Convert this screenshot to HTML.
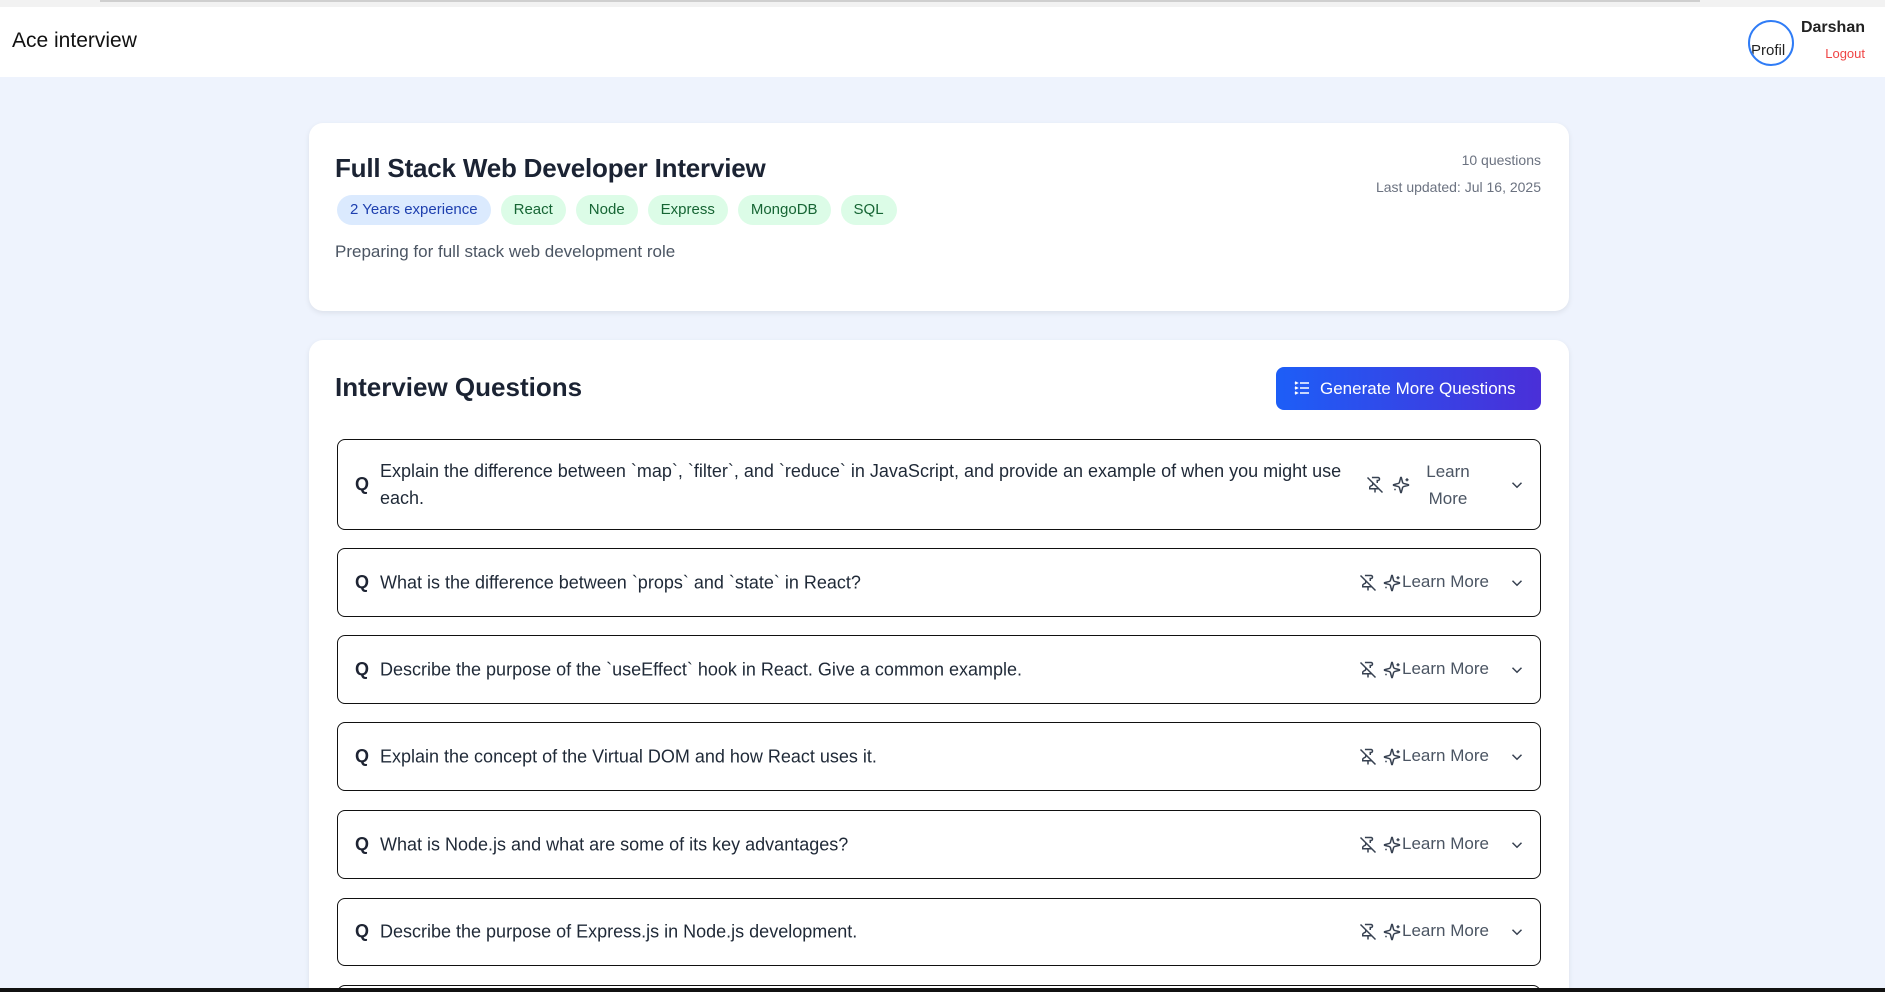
<!DOCTYPE html>
<html><head><meta charset="utf-8"><style>
*{box-sizing:border-box;margin:0;padding:0}
html,body{width:1885px;height:992px;overflow:hidden}
body{background:#eef3fd;font-family:"Liberation Sans",sans-serif;color:#1e2433;position:relative}
.top{position:absolute;left:0;top:0;width:1885px;height:7px;background:#f2f2f2}
.top i{position:absolute;left:100px;top:0;width:1600px;height:2px;background:#cfcfcf}
.hdr{position:absolute;left:0;top:7px;width:1885px;height:70px;background:#fff}
.logo{position:absolute;left:12px;top:22px;font-size:21px;color:#111}
.av{position:absolute;left:1748px;top:13px;width:46px;height:46px;border:2px solid #2f7cf6;border-radius:50%;overflow:hidden;font-size:15px;color:#222;padding:20px 0 0 1px}
.name{position:absolute;right:20px;top:12px;font-size:16px;font-weight:bold;color:#222}
.lo{position:absolute;right:20px;top:39px;font-size:13px;color:#ef4444}
.card{position:absolute;left:309px;width:1260px;background:#fff;border-radius:14px;box-shadow:0 2px 6px rgba(0,0,0,.08)}
h1{position:absolute;left:26px;top:30px;font-size:26px;font-weight:bold;color:#1b2333;letter-spacing:-.2px}
.tags{position:absolute;left:28px;top:72px;display:flex;gap:10px}
.tag{height:30px;line-height:30px;padding:0 13px;border-radius:15px;background:#dcfce7;color:#166534;font-size:15px}
.tag.b{background:#dbeafe;color:#1e40af}
.desc{position:absolute;left:26px;top:119px;font-size:17px;color:#4b5563}
.meta{position:absolute;right:28px;top:24px;text-align:right;font-size:14px;color:#6b7280;line-height:27px}
h2{position:absolute;left:26px;top:32px;font-size:26px;font-weight:bold;color:#1b2333}
.btn{position:absolute;left:967px;top:27px;width:265px;height:43px;border-radius:8px;background:linear-gradient(90deg,#1d5ef7,#4a2fd8);color:#fff;font-size:17px;line-height:43px;padding-left:44px}
.btn svg{position:absolute;left:18px;top:14px}
.q{position:absolute;left:28px;width:1204px;border:1.5px solid #111;border-radius:8px;background:#fff}
.q .Q{position:absolute;left:17px;top:50%;margin-top:-11px;font-weight:bold;font-size:18px}
.q .t{position:absolute;left:42px;top:50%;transform:translateY(-50%);font-size:18px;line-height:27px;color:#1f2937;white-space:nowrap}
.ic{position:absolute;top:50%;margin-top:-9px}
.lm{position:absolute;left:1064px;top:50%;margin-top:-11px;font-size:17px;color:#4b5563}
</style></head><body>
<div class="top"><i></i></div>
<div class="hdr"><div class="logo">Ace interview</div>
<div class="av">Profil</div>
<div class="name">Darshan</div><div class="lo">Logout</div></div>

<div class="card" style="top:123px;height:188px">
<h1>Full Stack Web Developer Interview</h1>
<div class="tags"><span class="tag b">2 Years experience</span><span class="tag">React</span><span class="tag">Node</span><span class="tag">Express</span><span class="tag">MongoDB</span><span class="tag">SQL</span></div>
<div class="desc">Preparing for full stack web development role</div>
<div class="meta">10 questions<br>Last updated: Jul 16, 2025</div>
</div>

<div class="card" style="top:340px;height:648px;border-radius:14px 14px 0 0;overflow:hidden">
<h2>Interview Questions</h2>
<div class="btn"><svg width="16" height="14" viewBox="0 0 16 14" fill="none" stroke="#fff" stroke-width="1.6"><path d="M6 2h9M6 7h9M6 12h9M1 1l2 1-2 1M1 6l2 1-2 1M1 11l2 1-2 1"/></svg>Generate More Questions</div>

<div class="q" style="top:99px;height:91px"><span class="Q">Q</span><div class="t">Explain the difference between `map`, `filter`, and `reduce` in JavaScript, and provide an example of when you might use<br>each.</div>
<svg class="ic" style="left:1028px" width="18" height="18" viewBox="0 0 24 24" fill="none" stroke="#374151" stroke-width="2"><path d="M2 2l20 20M12 17v5M9 9v1.8a2 2 0 01-1.1 1.8l-1.8.9A2 2 0 005 15.2V17h12M15 9.3V6h1a2 2 0 000-4H7.9"/></svg>
<svg class="ic" style="left:1054px" width="18" height="18" viewBox="0 0 24 24" fill="none" stroke="#374151" stroke-width="2"><path d="M9.9 15.5a2 2 0 00-1.4-1.4L2.4 12.5a.5.5 0 010-1l6.1-1.6a2 2 0 001.4-1.4l1.6-6.1a.5.5 0 011 0l1.6 6.1a2 2 0 001.4 1.4l6.1 1.6a.5.5 0 010 1l-6.1 1.6a2 2 0 00-1.4 1.4l-1.6 6.1a.5.5 0 01-1 0zM20 3v4M22 5h-4M4 17v2M5 18H3"/></svg>
<div class="lm" style="left:1080px;margin-top:-27px;width:60px;text-align:center;line-height:27px">Learn More</div>
<svg class="ic" style="left:1170px" width="18" height="18" viewBox="0 0 24 24" fill="none" stroke="#374151" stroke-width="2"><path d="M6 9l6 6 6-6"/></svg></div>

<div class="q" style="top:208px;height:69px"><span class="Q">Q</span><div class="t">What is the difference between `props` and `state` in React?</div></div>
<div class="q" style="top:295px;height:69px"><span class="Q">Q</span><div class="t">Describe the purpose of the `useEffect` hook in React. Give a common example.</div></div>
<div class="q" style="top:382px;height:69px"><span class="Q">Q</span><div class="t">Explain the concept of the Virtual DOM and how React uses it.</div></div>
<div class="q" style="top:470px;height:69px"><span class="Q">Q</span><div class="t">What is Node.js and what are some of its key advantages?</div></div>
<div class="q" style="top:558px;height:68px"><span class="Q">Q</span><div class="t">Describe the purpose of Express.js in Node.js development.</div></div>
<div class="q" style="top:645px;height:69px"></div>
</div>
<div style="position:absolute;left:0;top:988px;width:1885px;height:4px;background:#111"></div>
<script>
document.querySelectorAll('.q').forEach((q,i)=>{if(i==0||i==6)return;
q.insertAdjacentHTML('beforeend','<svg class="ic" style="left:1021px" width="18" height="18" viewBox="0 0 24 24" fill="none" stroke="#374151" stroke-width="2"><path d="M2 2l20 20M12 17v5M9 9v1.8a2 2 0 01-1.1 1.8l-1.8.9A2 2 0 005 15.2V17h12M15 9.3V6h1a2 2 0 000-4H7.9"/></svg><svg class="ic" style="left:1045px" width="18" height="18" viewBox="0 0 24 24" fill="none" stroke="#374151" stroke-width="2"><path d="M9.9 15.5a2 2 0 00-1.4-1.4L2.4 12.5a.5.5 0 010-1l6.1-1.6a2 2 0 001.4-1.4l1.6-6.1a.5.5 0 011 0l1.6 6.1a2 2 0 001.4 1.4l6.1 1.6a.5.5 0 010 1l-6.1 1.6a2 2 0 00-1.4 1.4l-1.6 6.1a.5.5 0 01-1 0zM20 3v4M22 5h-4M4 17v2M5 18H3"/></svg><div class="lm">Learn More</div><svg class="ic" style="left:1170px" width="18" height="18" viewBox="0 0 24 24" fill="none" stroke="#374151" stroke-width="2"><path d="M6 9l6 6 6-6"/></svg>');});
</script>
</body></html>
